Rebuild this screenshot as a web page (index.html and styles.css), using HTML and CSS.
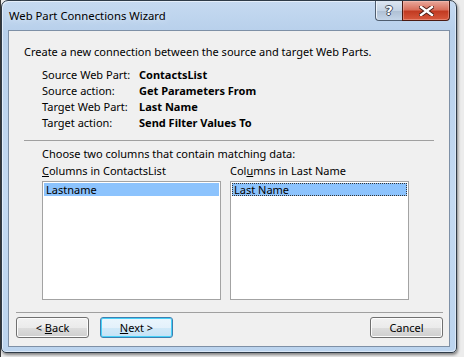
FILE: index.html
```html
<!DOCTYPE html>
<html lang="en">
<head>
    <meta charset="UTF-8">
    <meta name="viewport" content="width=device-width, initial-scale=1.0">
    <title>Web Part Connections Wizard</title>
    <link rel="stylesheet" href="styles.css">
</head>
<body>

    <div class="window">
        <div class="titlebar">
            <span class="title">Web Part Connections Wizard</span>
            <div class="caption-buttons">
                <div class="cap-btn help">?</div>
                <div class="cap-btn close">
                    <svg width="15" height="10" viewBox="0 0 15 10">
                        <path d="M2 1 L13 9 M13 1 L2 9" stroke="#4a1c14" stroke-width="4.2" stroke-linecap="square"/>
                        <path d="M2 1 L13 9 M13 1 L2 9" stroke="#ffffff" stroke-width="2.4" stroke-linecap="square"/>
                    </svg>
                </div>
            </div>
        </div>

        <div class="content">
            <div class="main">
                <p class="intro">Create a new connection between the source and target Web Parts.</p>

                <div class="details">
                    <span>Source Web Part:</span><b>ContactsList</b>
                    <span>Source action:</span><b>Get Parameters From</b>
                    <span>Target Web Part:</span><b>Last Name</b>
                    <span>Target action:</span><b>Send Filter Values To</b>
                </div>

                <div class="separator"></div>

                <div class="match">
                    <p class="choose">Choose two columns that contain matching data:</p>
                    <div class="lists">
                        <div class="list-col">
                            <label><u>C</u>olumns in ContactsList</label>
                            <div class="listbox">
                                <div class="item selected">Lastname</div>
                            </div>
                        </div>
                        <div class="list-col">
                            <label>Col<u>u</u>mns in Last Name</label>
                            <div class="listbox">
                                <div class="item selected focused">Last Name</div>
                            </div>
                        </div>
                    </div>
                </div>
            </div>

            <div class="footer">
                <button class="btn">&lt; <u>B</u>ack</button>
                <button class="btn default"><u>N</u>ext &gt;</button>
                <button class="btn cancel">Cancel</button>
            </div>
        </div>
    </div>

</body>
</html>
```

FILE: styles.css
```css
body {
    margin: 0;
    height: 357px;
    font-family: "Segoe UI", "Noto Sans", sans-serif;
    font-size: 11px;
    color: #000;
    background: linear-gradient(to right, #3a3a3a 1px, #ececec 1px);
    overflow: hidden;
}
.window {
    margin-left: 1px;
    width: 456px;
    height: 353px;
    box-sizing: border-box;
    border: 1px solid #2f3b48;
    border-radius: 7px 7px 5px 5px;
    padding: 0 6px 5px 6px;
    background: linear-gradient(to bottom, #c6daf1 0, #b8d0eb 30px, #c4daf2 200px, #bcd4ee 100%);
    box-shadow: inset 1px 1px 0 #e4eefa, inset -1px -1px 0 #dbe8f7, 1px 2px 3px rgba(0, 0, 0, 0.45);
    display: flex;
    flex-direction: column;
}
.titlebar {
    height: 29px;
    display: flex;
    align-items: flex-start;
}
.title {
    padding: 7px 0 0 1px;
    font-size: 11.3px;
    line-height: 16px;
    color: #000;
    text-shadow: 0 0 6px #e8f1fb;
}
.caption-buttons {
    margin-left: auto;
    display: flex;
    height: 20px;
}
.cap-btn {
    height: 19px;
    border: 1px solid #4f5d6f;
    border-top: none;
    display: flex;
    align-items: center;
    justify-content: center;
}
.help {
    width: 26px;
    border-right: none;
    border-radius: 0 0 0 4px;
    background: linear-gradient(to bottom, #dce6f1 0, #c4d3e4 50%, #aebfd3 51%, #c4d5e8 100%);
    box-shadow: inset 1px 0 0 #eef3f9;
    font-family: "DejaVu Sans", sans-serif;
    font-weight: bold;
    font-size: 13px;
    color: #fff;
    text-shadow: 1px 0 0 #3e4b5b, -1px 0 0 #3e4b5b, 0 1px 0 #3e4b5b, 0 -1px 0 #3e4b5b;
}
.close {
    width: 46px;
    border-radius: 0 0 4px 0;
    border-color: #4b1a12;
    background: linear-gradient(to bottom, #e9a99c 0, #d9705d 45%, #c23b22 55%, #d7593d 100%);
    box-shadow: inset 0 0 0 1px rgba(255, 210, 200, 0.35);
}
.content {
    flex: 1;
    border: 1px solid #7e90a6;
    background-color: #f0f0f0;
    display: flex;
    flex-direction: column;
}
.main {
    padding: 13px 15px 0 15px;
    line-height: 16px;
}
.intro {
    margin: 0 0 7px 0;
}
.details {
    margin-left: 18px;
    display: grid;
    grid-template-columns: 97px auto;
}
.details b {
    font-weight: bold;
}
.separator {
    margin-top: 9px;
    height: 1px;
    background-color: #a0a0a0;
}
.match {
    margin: 5px 0 0 18px;
}
.choose {
    margin: 0 0 1px 0;
}
.lists {
    display: flex;
    gap: 9px;
}
.list-col {
    display: flex;
    flex-direction: column;
}
.list-col label {
    margin-bottom: 2px;
}
.listbox {
    width: 175px;
    height: 115px;
    border: 1px solid #a3a3a3;
    padding: 1px;
    background-color: #fff;
}
.item {
    height: 13px;
    line-height: 13px;
    padding-left: 2px;
}
.item.selected {
    background-color: #8cc3fd;
}
.item.focused {
    outline: 1px dotted #333;
    outline-offset: -1px;
}
.footer {
    margin: 12px 6px 0 7px;
    padding-top: 4px;
    border-top: 1px solid #a0a0a0;
    display: flex;
    gap: 11px;
}
.btn {
    width: 73px;
    height: 21px;
    padding: 0;
    font-family: inherit;
    font-size: 11px;
    color: #000;
    border: 1px solid #707070;
    border-radius: 3px;
    background: linear-gradient(to bottom, #f2f2f2 0, #ebebeb 50%, #dddddd 51%, #cfcfcf 100%);
    box-shadow: inset 0 0 0 1px #fcfcfc;
}
.btn.default {
    border-color: #3c7fb1;
    box-shadow: inset 0 0 0 1px #48d1f8;
    background: linear-gradient(to bottom, #eaf6fd 0, #e4f1fb 50%, #d1e9f8 51%, #c4e2f6 100%);
}
.btn.cancel {
    margin-left: auto;
}
```
